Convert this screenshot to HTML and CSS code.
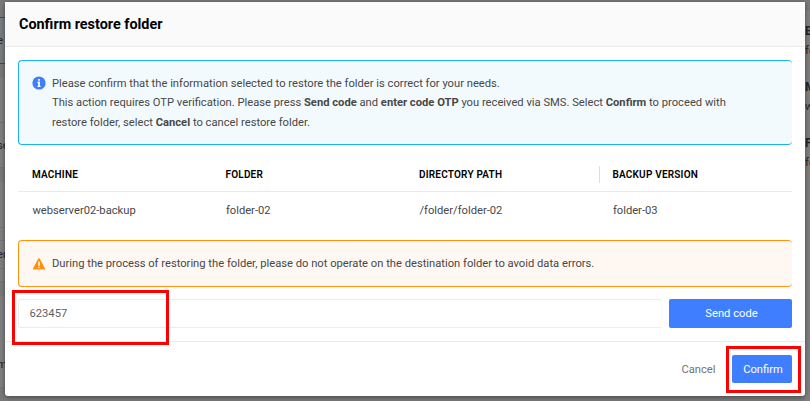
FILE: index.html
```html
<!DOCTYPE html>
<html lang="en">
<head>
  <meta charset="UTF-8" />
  <meta name="viewport" content="width=device-width, initial-scale=1.0" />
  <title>Confirm restore folder</title>
  <link rel="stylesheet" href="styles.css">
</head>

<body>
  <div class="page">
    <div class="page-left">
      <div class="strip top"></div>
      <div class="notice">e</div>
      <div class="strip gap"></div>
      <div class="cell head"></div>
      <div class="cell name">se</div>
      <div class="strip space"></div>
      <div class="cell row"></div>
      <div class="cell line"></div>
      <div class="cell owner">er</div>
      <div class="cell line"></div>
      <div class="strip space"></div>
      <div class="cell item">m</div>
      <div class="strip end"></div>
    </div>
    <div class="page-right">
      <b>B</b><span>fo</span>
      <b>M</b><span>w</span>
      <b>F</b><span>fo</span>
    </div>
  </div>

  <div class="modal">
    <div class="modal-header">Confirm restore folder</div>

    <div class="modal-body">
      <div class="alert info">
        <svg class="icon" viewBox="0 0 14 14">
          <circle cx="7" cy="7" r="6.6" fill="#3f7fff" />
          <rect x="6.1" y="3" width="1.8" height="1.8" fill="#fff" />
          <rect x="5.3" y="5.8" width="2.6" height="1" fill="#fff" />
          <rect x="6.1" y="5.8" width="1.8" height="5" fill="#fff" />
          <rect x="5.3" y="10" width="3.4" height="0.9" fill="#fff" />
        </svg>
        <p>
          Please confirm that the information selected to restore the folder is correct for your needs.<br>
          This action requires OTP verification. Please press <b>Send code</b> and <b>enter code OTP</b> you received via SMS. Select <b>Confirm</b> to proceed with<br>
          restore folder, select <b>Cancel</b> to cancel restore folder.
        </p>
      </div>

      <table class="summary">
        <thead>
          <tr><th>MACHINE</th><th>FOLDER</th><th>DIRECTORY PATH</th><th><span class="divider"></span>BACKUP VERSION</th></tr>
        </thead>
        <tbody>
          <tr><td>webserver02-backup</td><td>folder-02</td><td>/folder/folder-02</td><td>folder-03</td></tr>
        </tbody>
      </table>

      <div class="alert warning">
        <svg class="icon" viewBox="0 0 14 14">
          <path d="M7 2 L12.3 11.8 H1.7 Z" fill="#ff8f0c" stroke="#ff8f0c" stroke-width="1.6" stroke-linejoin="round" />
          <rect x="6.3" y="4.5" width="1.4" height="4.2" fill="#fff" />
          <rect x="6.3" y="9.7" width="1.4" height="1.5" fill="#fff" />
        </svg>
        <p>During the process of restoring the folder, please do not operate on the destination folder to avoid data errors.</p>
      </div>

      <div class="otp">
        <input class="otp-input" type="text" value="623457">
        <button class="btn send">Send code</button>
      </div>
    </div>

    <div class="modal-footer">
      <button class="btn cancel">Cancel</button>
      <button class="btn confirm">Confirm</button>
    </div>
  </div>

  <div class="mark mark-code"></div>
  <div class="mark mark-confirm"></div>
</body>
</html>
```

FILE: styles.css
```css
* {
  box-sizing: border-box;
}

body {
  margin: 0;
  width: 810px;
  height: 401px;
  overflow: hidden;
  position: relative;
  background-color: #797979;
  font-family: Roboto, sans-serif;
  font-size: 11.2px;
  color: #474747;
}

p {
  margin: 0;
}

.page {
  display: flex;
  justify-content: space-between;
  height: 401px;
  color: #242424;
}

.page-left {
  width: 6px;
  overflow: hidden;
}

.strip.top { height: 17px; }
.strip.gap { height: 13px; }
.strip.space { height: 14px; }

.notice {
  height: 47px;
  line-height: 45px;
  margin-left: -3px;
  background-color: #797d7f;
  border-top: 1px solid #0d5d77;
  border-bottom: 1px solid #0d5d77;
}

.cell {
  margin-left: -3px;
  background-color: #7f7f7f;
  border-bottom: 1px solid #747474;
}

.cell.head { height: 46px; }
.cell.name { height: 45px; line-height: 45px; }
.cell.row { height: 46px; }
.cell.line { height: 13px; }
.cell.owner { height: 28px; line-height: 27px; }
.cell.item { height: 92px; padding-top: 46px; line-height: 45px; }

.page-right {
  width: 5px;
  margin-top: 9px;
  padding-top: 12px;
  overflow: hidden;
  border-top: 1px solid #747474;
  background-color: #7f7f7f;
}

.page-right b,
.page-right span {
  display: block;
  height: 19px;
  line-height: 19px;
}

.page-right b {
  font-size: 12px;
}

.page-right span {
  margin-bottom: 18px;
}

.modal {
  position: absolute;
  left: 5px;
  top: 2px;
  width: 800px;
  height: 394px;
  background-color: #fff;
  border-radius: 0 0 3px 3px;
  box-shadow: 0 1px 5px rgba(0, 0, 0, 0.45);
}

.modal-header {
  height: 45px;
  padding-left: 14px;
  line-height: 45px;
  background-color: #fafafa;
  border-bottom: 1px solid #ebebeb;
  color: #000;
  font-size: 14.4px;
  font-weight: bold;
}

.modal-body {
  height: 295px;
  padding: 13px 13px 0;
  border-bottom: 1px solid #ebebeb;
}

.alert {
  display: flex;
  padding-left: 13px;
  border: 1px solid;
  border-right: none;
  border-radius: 4px;
}

.alert.info {
  height: 85px;
  padding-top: 13px;
  line-height: 19.3px;
  background-color: #f3fafe;
  border-color: #1cb5e8;
}

.alert.warning {
  height: 47px;
  line-height: 45px;
  background-color: #fff8f2;
  border-color: #ff9310;
}

.icon {
  flex: none;
  width: 14px;
  height: 14px;
  margin-right: 6px;
}

.info .icon { margin-top: 2px; }
.warning .icon { margin-top: 16px; }

.summary {
  width: 774px;
  height: 85px;
  margin-bottom: 10px;
  border-collapse: collapse;
  table-layout: fixed;
}

.summary th,
.summary td {
  padding: 0 0 0 14px;
  text-align: left;
}

.summary th {
  height: 46px;
  padding-top: 14px;
  border-bottom: 1px solid #ebebeb;
  color: #000;
  font-size: 10px;
  font-weight: 600;
  letter-spacing: 0.2px;
  position: relative;
}

.summary td {
  height: 39px;
  padding-left: 14.4px;
}

.divider {
  position: absolute;
  left: 0;
  top: 21px;
  width: 1px;
  height: 17px;
  background-color: #dedede;
}

.otp {
  display: flex;
  gap: 7px;
  margin-top: 12px;
}

.otp-input {
  width: 644px;
  height: 29px;
  padding: 0 10.5px;
  border: 1px solid #ececec;
  border-right-color: #fafafa;
  border-radius: 3px;
  color: #606060;
  font: 11.2px Roboto, sans-serif;
}

.btn {
  padding: 0;
  border: none;
  border-radius: 2px;
  background-color: #3f7fff;
  color: #fff;
  font: 11.2px Roboto, sans-serif;
}

.btn.send {
  width: 123px;
  height: 29px;
  padding-left: 2px;
}

.modal-footer {
  display: flex;
  justify-content: flex-end;
  padding: 13px 13px 0;
}

.btn.cancel {
  width: 68px;
  padding-left: 1px;
  background: none;
  color: #737373;
}

.btn.confirm {
  width: 60px;
  height: 28px;
  padding-left: 2px;
}

.mark {
  position: absolute;
  border: 3px solid #f00;
}

.mark-code {
  left: 12px;
  top: 290px;
  width: 157px;
  height: 55px;
}

.mark-confirm {
  left: 726px;
  top: 346px;
  width: 75px;
  height: 47px;
}
```
